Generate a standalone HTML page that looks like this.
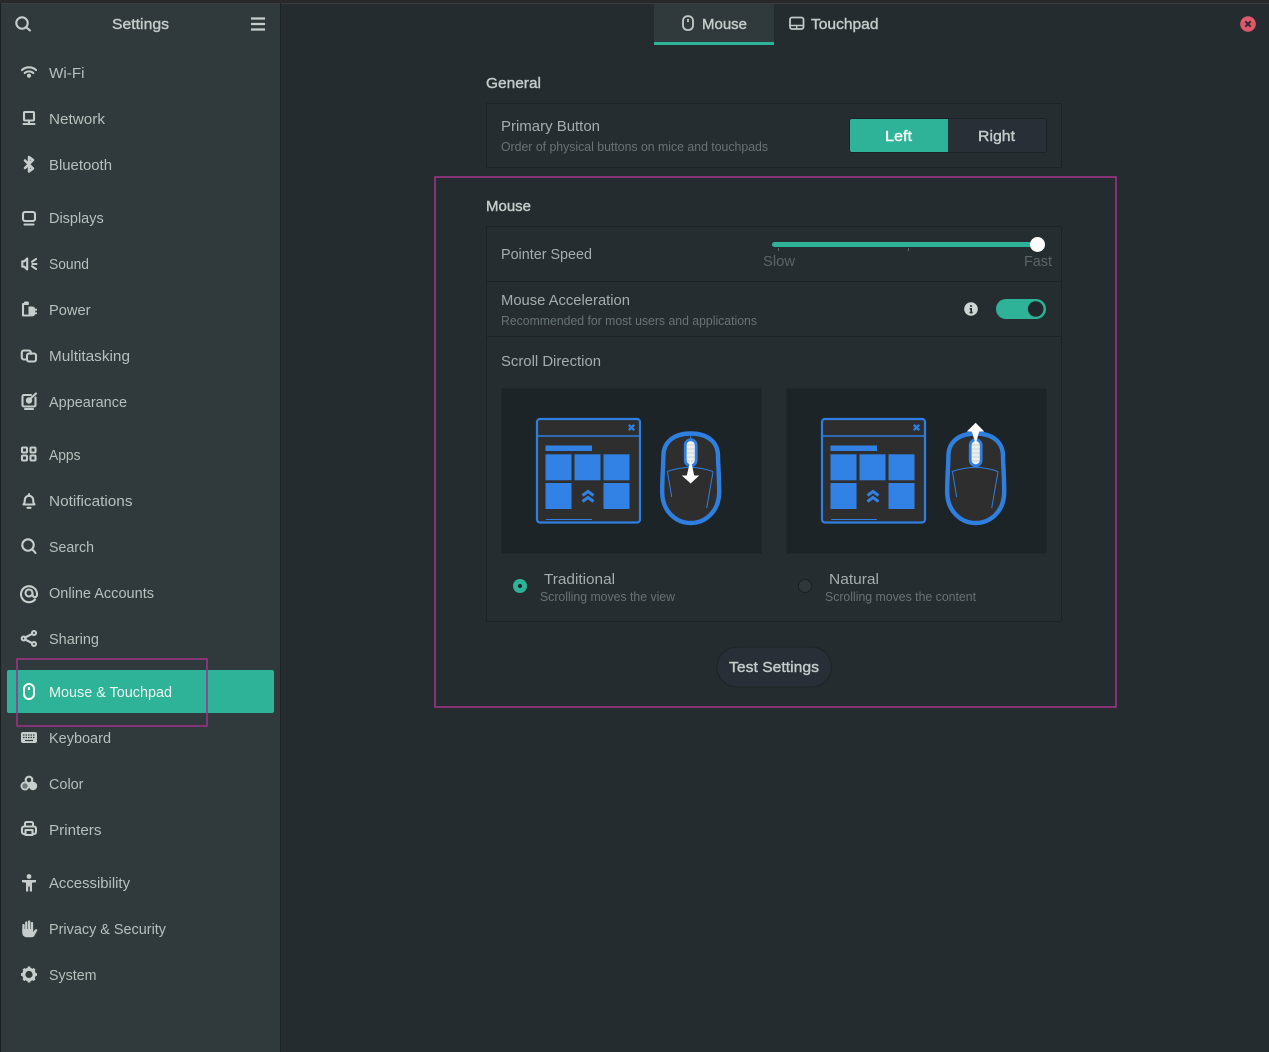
<!DOCTYPE html>
<html lang="en"><head><meta charset="utf-8"><title>Settings</title>
<style>
html,body{margin:0;padding:0;background:#242c2f;width:1269px;height:1052px;overflow:hidden}
svg{display:block}
text{font-family:"Liberation Sans",sans-serif;font-size:15px}
.s{fill:#b6c0be}
.m{fill:#a4aeae}
.d{fill:#687374;font-size:12.5px}
.b{fill:#c4cccb;stroke:#c4cccb;stroke-width:.4}
.i{fill:none;stroke:#c6cecd;stroke-width:2.1;stroke-linecap:round;stroke-linejoin:round}
.f{fill:#c6cecd;stroke:none}
</style></head><body>
<svg width="1269" height="1052" viewBox="0 0 1269 1052" xmlns="http://www.w3.org/2000/svg">
<defs>
<g id="win">
<rect x="537" y="419" width="103" height="103.500" rx="3" fill="#2e2e2e" stroke="#2f7fe0" stroke-width="2.200"/>
<path d="M537 436H640" stroke="#2f7fe0" stroke-width="1.400"/>
<path d="M628.800 424.800l5.400 5.400m0-5.400l-5.400 5.400" stroke="#2f7fe0" stroke-width="2.400" fill="none"/>
<g fill="#3281e4">
<rect x="545.500" y="445.500" width="46.500" height="5.500"/>
<rect x="545.500" y="454.300" width="26" height="26"/>
<rect x="574.500" y="454.300" width="26" height="26"/>
<rect x="603.500" y="454.300" width="26" height="26"/>
<rect x="545.500" y="483" width="26" height="26"/>
<rect x="603.500" y="483" width="26" height="26"/>
</g>
<path d="M582.500 495.500l5.500-4 5.500 4M582.500 501.500l5.500-4 5.500 4" fill="none" stroke="#3281e4" stroke-width="3"/>
<path d="M546 519.500H592" stroke="#2f7fe0"/>
</g>
<g id="ms">
<path d="M690.700 433.500C708.700 433.500 718 443 718 456C718 464 719.200 476 719.200 492C719.200 511 705.700 523 690.700 523C675.700 523 662.200 511 662.200 492C662.200 476 663.400 464 663.400 456C663.400 443 672.700 433.500 690.700 433.500Z" fill="#2e2e2e" stroke="#2f7fe0" stroke-width="4.400"/>
<path d="M666.700 471.700Q690.700 463 713.300 471.700M667.500 472L671.700 497M713 472L706.700 508M690.700 434V439" fill="none" stroke="#2f7fe0" stroke-width="1"/>
<rect x="685.200" y="439.700" width="11" height="26" rx="5.500" fill="#eceeee" stroke="#2f7fe0" stroke-width="2.800"/>
<path d="M687 445h7.500M687 449h7.500M687 453h7.500M687 457h7.500M687 461h7.500" stroke="#c4c8ca" stroke-width=".7"/>
</g>
</defs>

<rect width="1269" height="1052" fill="#242c2f"/>
<rect width="1269" height="3" fill="#29282c"/>
<rect y="3" width="1269" height="1" fill="#3a3d3f"/>
<rect x="0" y="3" width="1" height="1049" fill="#1a1f21"/>
<rect x="1" y="4" width="279" height="1048" fill="#30393b"/>
<rect x="280" y="3" width="1" height="1049" fill="#1c2325"/>

<!-- header -->
<circle cx="22" cy="23" r="5.700" class="i"/><path d="M26.300 27.300L30 30.500" class="i"/>
<text x="112" y="29" class="b" textLength="57" lengthAdjust="spacingAndGlyphs">Settings</text>
<path d="M251 18.500H265M251 24H265M251 29.500H265" stroke="#c6cecd" stroke-width="2.200"/>

<!-- selected row -->
<rect x="7" y="670" width="267" height="43" rx="2" fill="#2eb398"/>

<!-- sidebar text -->
<text x="49" y="78" class="s" textLength="35.500" lengthAdjust="spacingAndGlyphs">Wi-Fi</text>
<text x="49" y="124" class="s" textLength="56" lengthAdjust="spacingAndGlyphs">Network</text>
<text x="49" y="170" class="s" textLength="63" lengthAdjust="spacingAndGlyphs">Bluetooth</text>
<text x="49" y="223" class="s" textLength="54.700" lengthAdjust="spacingAndGlyphs">Displays</text>
<text x="49" y="269" class="s" textLength="40" lengthAdjust="spacingAndGlyphs">Sound</text>
<text x="49" y="315" class="s" textLength="41.500" lengthAdjust="spacingAndGlyphs">Power</text>
<text x="49" y="361" class="s" textLength="81" lengthAdjust="spacingAndGlyphs">Multitasking</text>
<text x="49" y="407" class="s" textLength="78" lengthAdjust="spacingAndGlyphs">Appearance</text>
<text x="49" y="460" class="s" textLength="31.500" lengthAdjust="spacingAndGlyphs">Apps</text>
<text x="49" y="506" class="s" textLength="83.500" lengthAdjust="spacingAndGlyphs">Notifications</text>
<text x="49" y="552" class="s" textLength="45" lengthAdjust="spacingAndGlyphs">Search</text>
<text x="49" y="598" class="s" textLength="105" lengthAdjust="spacingAndGlyphs">Online Accounts</text>
<text x="49" y="644" class="s" textLength="50" lengthAdjust="spacingAndGlyphs">Sharing</text>
<text x="49" y="697" fill="#eef5f3" textLength="123" lengthAdjust="spacingAndGlyphs">Mouse &amp; Touchpad</text>
<text x="49" y="743" class="s" textLength="62" lengthAdjust="spacingAndGlyphs">Keyboard</text>
<text x="49" y="789" class="s" textLength="34.500" lengthAdjust="spacingAndGlyphs">Color</text>
<text x="49" y="835" class="s" textLength="52.500" lengthAdjust="spacingAndGlyphs">Printers</text>
<text x="49" y="888" class="s" textLength="81" lengthAdjust="spacingAndGlyphs">Accessibility</text>
<text x="49" y="934" class="s" textLength="117" lengthAdjust="spacingAndGlyphs">Privacy &amp; Security</text>
<text x="49" y="980" class="s" textLength="47.500" lengthAdjust="spacingAndGlyphs">System</text>

<!-- sidebar icons -->
<path d="M22 70a10.500 10.500 0 0 1 14 0M24.700 73a6.500 6.500 0 0 1 8.600 0" class="i"/><circle cx="29" cy="75.800" r="2" class="f"/>
<rect x="24" y="112" width="10" height="8.500" rx="1" class="i"/><path d="M29 121v3M23.500 124h11" class="i"/>
<path d="M25 160.500l8 8-4 3V157l4 3-8 8" class="i" style="stroke-width:2.500"/>
<rect x="23" y="212" width="12" height="9" rx="2" class="i"/><path d="M24.500 224.500h9" class="i"/>
<path d="M22.300 261.300h1.900l3-2.800v11l-3-2.800h-1.900z" class="i"/><path d="M36 259l-4 2.800M36.500 264h-4M36 269l-4-2.800" class="i"/>
<path d="M28 304h-5v11.500H29M25 304v-1.500h2.800V304" class="i"/><path class="f" d="M28.500 306.500h3.500a3.500 3.500 0 0 1 3.300 2.300H37v1.800h-1.700v1.800H37v1.700h-1.700a3.500 3.500 0 0 1-3.300 2.300h-3.500z"/>
<path d="M25.500 359.500h-1.700a2 2 0 0 1-2-2v-5a2 2 0 0 1 2-2h5a2 2 0 0 1 2 2v1.500" class="i"/><rect x="27" y="353.500" width="9" height="8" rx="2" class="i"/>
<path d="M35.500 397.500v7.500a1.500 1.500 0 0 1-1.500 1.500H24a1.500 1.500 0 0 1-1.500-1.500v-8.500a1.500 1.500 0 0 1 1.500-1.500h7M25 409h8" class="i"/><circle cx="29" cy="400.500" r="3.200" class="f"/><path d="M31 398l5-4.500" class="i"/>
<g class="i"><rect x="22" y="447.500" width="5" height="5" rx="1"/><rect x="30.500" y="447.500" width="5" height="5" rx="1"/><rect x="22" y="455.500" width="5" height="5" rx="1"/><rect x="30.500" y="455.500" width="5" height="5" rx="1"/></g>
<path d="M23.500 504.500h11c-1.300-1.500-1.300-3-1.300-4.500a4.200 4.200 0 0 0-8.400 0c0 1.500 0 3-1.300 4.500z" class="i"/><path d="M27.500 507.800h3" class="i"/><circle cx="29" cy="494.300" r="1.200" class="f"/>
<circle cx="28" cy="545" r="5.700" class="i"/><path d="M32.300 549.300L35.500 553" class="i"/>
<path d="M35 599.500a8 8 0 1 1 2-5.500v1a2.200 2.200 0 0 1-4.400 0v-1" class="i"/><circle cx="29" cy="593" r="3.500" class="i"/>
<path d="M25 637.500l7-3.500M25 639.500l7 3.500" class="i"/><circle cx="23.700" cy="638.500" r="2" class="i"/><circle cx="34" cy="633" r="2" class="i"/><circle cx="34" cy="644" r="2" class="i"/>
<rect x="24" y="684" width="10" height="15" rx="5" fill="none" stroke="#fff" stroke-width="2"/><path d="M29 687v3" stroke="#fff" stroke-width="2"/>
<rect x="21" y="732" width="16" height="11" rx="2" class="f"/><path d="M23 735h12M23 737.500h12" stroke="#30393b" stroke-dasharray="1.500 1" stroke-width="1.200"/><path d="M25 740.500h8" stroke="#30393b" stroke-width="1.200"/>
<circle cx="29" cy="780" r="3.300" class="i"/><circle cx="25" cy="786" r="3.600" fill="#6f7878" stroke="#c6cecd" stroke-width="1.800"/><circle cx="33" cy="786" r="4.200" class="f"/>
<path d="M25 826v-2.500a1.500 1.500 0 0 1 1.500-1.500h5a1.500 1.500 0 0 1 1.500 1.500v2.500M25 834h-1a2 2 0 0 1-2-2v-3.500a2 2 0 0 1 2-2h10a2 2 0 0 1 2 2v3.500a2 2 0 0 1-2 2h-1" class="i"/><rect x="25.500" y="830" width="7" height="5" class="i"/>
<circle cx="29" cy="876.500" r="2.400" class="f"/><path class="f" d="M22 880h14v2.200l-4 .6v8.700h-2.200v-5h-1.600v5H26v-8.700l-4-.6z"/>
<path d="M23.500 925v6M26.300 922.500v7M29.200 921.500v8M32 923v7" class="i" style="stroke-width:2.300"/>
<path class="f" d="M22.300 929H33.200V932l2-2.500c1-1 2.700 0 2 1l-2.700 5c-.7 1.300-1.800 1.800-3.300 1.800h-4c-3 0-4.900-2-4.900-4.300z"/>
<circle cx="29" cy="974.500" r="5.200" fill="none" stroke="#c6cecd" stroke-width="3.200"/><path d="M29 966.500v3M29 979.500v3M21 974.500h3M34 974.500h3M23.400 968.900l2.100 2.100M32.500 978l2.100 2.100M23.400 980.100l2.100-2.100M32.500 971l2.100-2.100" stroke="#c6cecd" stroke-width="2.800"/>

<!-- tabs -->
<rect x="654" y="4" width="120" height="38" fill="#30393b"/>
<rect x="654" y="42" width="120" height="3" fill="#2eb398"/>
<rect x="683" y="16.200" width="10" height="13.800" rx="4.500" fill="none" stroke="#c0c8c7" stroke-width="1.800"/><path d="M688 19v3" stroke="#c0c8c7" stroke-width="1.800"/>
<text x="702" y="29" class="b" textLength="45" lengthAdjust="spacingAndGlyphs">Mouse</text>
<rect x="790" y="17.500" width="13.500" height="11.500" rx="2" fill="none" stroke="#c0c8c7" stroke-width="1.800"/><path d="M790 25.500h13.500M796.700 25.500V29" stroke="#c0c8c7" stroke-width="1.400"/>
<text x="811" y="29" class="b" textLength="67.500" lengthAdjust="spacingAndGlyphs">Touchpad</text>

<!-- close -->
<circle cx="1248" cy="24" r="7.800" fill="#e0596a"/><path d="M1245.300 21.300l5.400 5.400m0-5.400l-5.400 5.400" stroke="#2a2a2e" stroke-width="1.900"/>

<!-- General -->
<text x="486" y="88" class="b" textLength="55" lengthAdjust="spacingAndGlyphs">General</text>
<rect x="486.500" y="103.500" width="575" height="64" rx="1" fill="#252d30" stroke="#1c2326"/>
<text x="501" y="131" class="m" textLength="99" lengthAdjust="spacingAndGlyphs">Primary Button</text>
<text x="501" y="151" class="d" textLength="267" lengthAdjust="spacingAndGlyphs">Order of physical buttons on mice and touchpads</text>
<rect x="849.500" y="118.500" width="197" height="34" rx="2" fill="#282f37" stroke="#1c2326"/>
<path d="M852 119h96v33h-96a2 2 0 0 1-2-2v-29a2 2 0 0 1 2-2z" fill="#2eb398"/>
<text x="885" y="141" textLength="27" lengthAdjust="spacingAndGlyphs" style="fill:#f4f8f7;stroke:#f4f8f7;stroke-width:.45">Left</text>
<text x="978" y="141" class="b" textLength="37" lengthAdjust="spacingAndGlyphs">Right</text>

<!-- Mouse -->
<text x="486" y="211" class="b" textLength="45" lengthAdjust="spacingAndGlyphs">Mouse</text>
<rect x="486.500" y="226.500" width="575" height="395" rx="1" fill="#252d30" stroke="#1c2326"/>
<path d="M487 281.500H1061M487 336.500H1061" stroke="#1c2326"/>
<text x="501" y="259" class="m" textLength="91" lengthAdjust="spacingAndGlyphs">Pointer Speed</text>
<rect x="772" y="242" width="265" height="5" rx="2.500" fill="#2eb398"/>
<path d="M778.500 248v3M908.500 248v3" stroke="#5d6868"/>
<circle cx="1037.500" cy="244.500" r="7.500" fill="#fbfcfc"/>
<text x="763" y="266" textLength="32" lengthAdjust="spacingAndGlyphs" fill="#5a6566">Slow</text>
<text x="1024" y="266" textLength="28" lengthAdjust="spacingAndGlyphs" fill="#5a6566">Fast</text>

<text x="501" y="305" class="m" textLength="129" lengthAdjust="spacingAndGlyphs">Mouse Acceleration</text>
<text x="501" y="325" class="d" textLength="256" lengthAdjust="spacingAndGlyphs">Recommended for most users and applications</text>
<circle cx="971" cy="309" r="6.800" fill="#ced5d3"/><path d="M971 305v2M969.700 308.800h1.500v3.600M969.600 312.600h3" stroke="#242c2f" stroke-width="1.600" fill="none"/>
<rect x="996" y="299" width="50" height="20" rx="10" fill="#2eb398"/>
<circle cx="1035.700" cy="309" r="7.800" fill="#20282b"/>

<text x="501" y="366" class="m" textLength="100" lengthAdjust="spacingAndGlyphs">Scroll Direction</text>

<rect x="501.500" y="388.500" width="260" height="165" fill="#1d2427" stroke="#20282a"/>
<rect x="786.500" y="388.500" width="260" height="165" fill="#1d2427" stroke="#20282a"/>
<use href="#win"/><use href="#ms"/>
<use href="#win" x="285"/><use href="#ms" x="285"/>
<path d="M690.700 459l3.500 16.500h5l-8.500 8-8.900-8h5z" fill="#fff"/>
<path d="M975.700 444l3.500-12.500h5l-8.500-8.700-8.900 8.700h5z" fill="#fff"/>

<circle cx="520" cy="586" r="7" fill="#2eb398"/><circle cx="520" cy="586" r="2" fill="#1c2326"/>
<text x="544" y="584" class="m" textLength="71" lengthAdjust="spacingAndGlyphs">Traditional</text>
<text x="540" y="601" class="d" textLength="135" lengthAdjust="spacingAndGlyphs">Scrolling moves the view</text>
<circle cx="805" cy="586" r="6.500" fill="#2e3739" stroke="#1b2123"/>
<text x="829" y="584" class="m" textLength="50" lengthAdjust="spacingAndGlyphs">Natural</text>
<text x="825" y="601" class="d" textLength="151" lengthAdjust="spacingAndGlyphs">Scrolling moves the content</text>

<rect x="717" y="647" width="114.500" height="40" rx="20" fill="#282f36" stroke="#1c2326"/>
<text x="729" y="672" class="b" textLength="90" lengthAdjust="spacingAndGlyphs">Test Settings</text>

<!-- annotations -->
<rect x="435" y="177" width="681" height="530" fill="none" stroke="#9b3488" stroke-width="1.600"/>
<rect x="17" y="659" width="190" height="67" fill="none" stroke="#9b3488" stroke-width="1.600"/>
</svg>
</body></html>
